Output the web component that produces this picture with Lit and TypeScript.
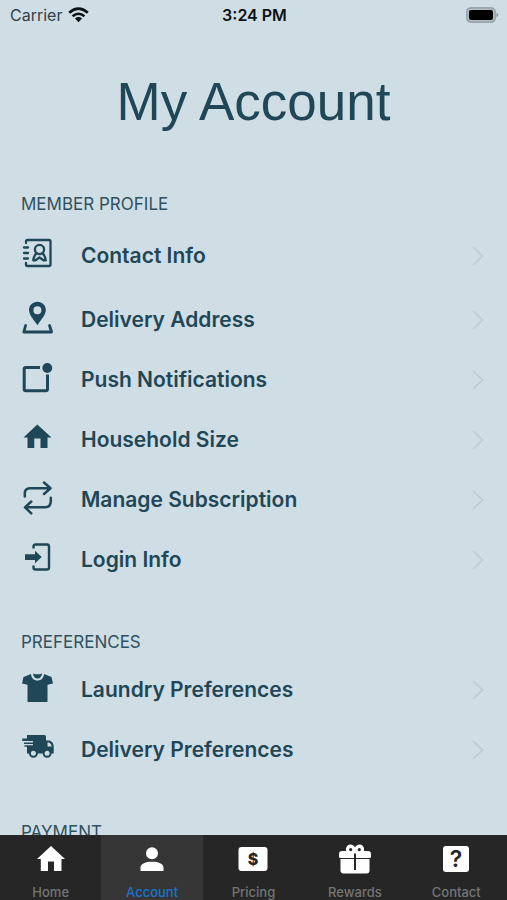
import { LitElement, html, svg, css, type SVGTemplateResult } from "lit";
import { customElement, property } from "lit/decorators.js";
import { classMap } from "lit/directives/class-map.js";

const icons: Record<string, SVGTemplateResult> = {
  contact: svg`
    <g fill="none" stroke="currentColor" stroke-width="2.300" stroke-linecap="round" stroke-linejoin="round">
      <path d="M5 6V4.500Q5 3 6.500 3H28Q29.500 3 29.500 4.500V27.500Q29.500 29 28 29H6.500Q5 29 5 27.500V26"/>
      <path d="M3 10.500H7M3 16H7M3 21.500H7"/>
      <circle cx="18.500" cy="12.500" r="4.600"/>
      <path d="M15.500 16.200C14 18 12.500 19.500 12.200 23.300H14.500L18.500 20.500L22.500 23.300H24.800C24.500 19.500 23 18 21.500 16.200"/>
    </g>`,
  pin: svg`
    <path fill="currentColor" fill-rule="evenodd" d="M16.400 .7C11.600 .7 8 4.300 8 9C8 14 12.500 18 16.400 24.300C20.300 18 24.800 14 24.800 9C24.800 4.300 21.200 .7 16.400 .7ZM16.400 5.200A4 4 0 1 1 16.400 13.200A4 4 0 0 1 16.400 5.200Z"/>
    <path fill="none" stroke="currentColor" stroke-width="2.800" stroke-linecap="round" stroke-linejoin="round" d="M4.600 24.500L2.800 31H30.600L28.500 24.500"/>`,
  push: svg`
    <path fill="none" stroke="currentColor" stroke-width="3" d="M19 6.500H5Q3.200 6.500 3.200 8.300V28Q3.200 29.800 5 29.800H24.700Q26.500 29.800 26.500 28V13.500"/>
    <circle cx="26.300" cy="7" r="4.900" fill="currentColor"/>`,
  house: svg`
    <path fill="currentColor" d="M16.300 3.500L30.500 16.500H26.500V27H19.500V17.500H13.300V27H6.500V16.500H2.500Z"/>`,
  repeat: svg`
    <path fill="none" stroke="currentColor" stroke-width="2.500" stroke-linecap="round" stroke-linejoin="round" d="M3.800 15.500V12.500Q3.800 7.200 9 7.200H29M23 1.500L29.500 7.200L23 13M29.800 16.800V20Q29.800 26.300 24 26.300H4.500M10.300 20.500L4 26.300L10.300 32.300"/>`,
  login: svg`
    <path fill="none" stroke="currentColor" stroke-width="2.400" d="M12.500 7.500V5.500Q12.500 3.500 14.500 3.500H26Q28 3.500 28 5.500V26.500Q28 28.500 26 28.500H14.500Q12.500 28.500 12.500 26.500V24.500"/>
    <path fill="currentColor" d="M4 13.300H14V9.700L20.700 16L14 22.300V19H4Z"/>`,
  shirt: svg`
    <path fill="currentColor" d="M10 3L2.500 6L1 12.500L6.500 13.800V31H26.500V13.800L32 12.500L30.500 6L23 3C22.500 7.500 20 9.500 16.500 9.500S10.500 7.500 10 3Z"/>
    <path fill="currentColor" d="M12 2.500Q16.500 4.200 21 2.500C20.500 6 19 7.600 16.500 7.600S12.500 6 12 2.500Z"/>`,
  truck: svg`
    <path fill="currentColor" fill-rule="evenodd" d="M6 4H23.500Q25 4 25 5.500V9.500H28.500Q32.700 11 32.700 15.500V22.500H6V15.800H3.500V14.300H12V13H3V11.500H12V10H1.200V7.500H6ZM26.500 11.500V15.500H30.700Q30.500 12.500 28 11.500Z"/>
    <g class="wheel">
      <circle cx="12.400" cy="22.300" r="3.500"/>
      <circle cx="26.100" cy="22.300" r="3.500"/>
    </g>`,
  home: svg`
    <path fill="currentColor" d="M16 3L30 16H26.500V28H19V18.500H13V28H5.800V16H2Z"/>`,
  person: svg`
    <circle cx="16" cy="10.300" r="6" fill="currentColor"/>
    <path fill="currentColor" d="M4.500 28V24.500C4.500 20.500 10 18.700 16 18.700S27.500 20.500 27.500 24.500V28Z"/>`,
  price: svg`
    <rect x="1.500" y="4" width="29" height="24" rx="3" fill="currentColor"/>
    <text class="mark heavy" x="16" y="21.500" font-size="16">$</text>`,
  gift: svg`
    <path fill="currentColor" fill-rule="evenodd" d="M3 8H7.200A4.700 4.700 0 0 1 16 4.500A4.700 4.700 0 0 1 24.800 8H29Q32 8 32 11V13.500Q32 15 30.500 15H1.500Q0 15 0 13.500V11Q0 8 3 8ZM11.700 5A1.600 1.600 0 1 0 11.700 8.200A1.600 1.600 0 0 0 11.700 5ZM20.300 5A1.600 1.600 0 1 0 20.300 8.200A1.600 1.600 0 0 0 20.300 5Z"/>
    <path fill="currentColor" d="M1.500 16H30.500V27.500Q30.500 30.500 27.500 30.500H4.500Q1.500 30.500 1.500 27.500Z"/>
    <path class="ribbon" d="M16 10.500V27"/>`,
  help: svg`
    <rect x="3" y="3" width="26" height="26" rx="3" fill="currentColor"/>
    <text class="mark" x="16" y="24" font-size="23">?</text>`,
};

@customElement("app-icon")
class AppIcon extends LitElement {
  @property() name = "";

  static styles = css`
    :host {
      display: block;
      flex: none;
      width: 32px;
      height: 32px;
    }
    .icon {
      display: block;
      width: 100%;
      height: 100%;
      overflow: visible;
    }
    .mark {
      fill: #262626;
      font-family: Inter, sans-serif;
      font-weight: 600;
      text-anchor: middle;
    }
    .mark.heavy {
      font-weight: 800;
    }
    .ribbon {
      stroke: #262626;
      stroke-width: 2;
    }
    .wheel {
      fill: #cfdde4;
      stroke: currentColor;
      stroke-width: 2;
    }
  `;

  render() {
    return html`<svg class="icon" viewBox="0 0 32 32" aria-hidden="true">${icons[this.name]}</svg>`;
  }
}

interface Item {
  icon: string;
  label: string;
}

interface Section {
  title: string;
  items: Item[];
}

const sections: Section[] = [
  {
    title: "MEMBER PROFILE",
    items: [
      { icon: "contact", label: "Contact Info" },
      { icon: "pin", label: "Delivery Address" },
      { icon: "push", label: "Push Notifications" },
      { icon: "house", label: "Household Size" },
      { icon: "repeat", label: "Manage Subscription" },
      { icon: "login", label: "Login Info" },
    ],
  },
  {
    title: "PREFERENCES",
    items: [
      { icon: "shirt", label: "Laundry Preferences" },
      { icon: "truck", label: "Delivery Preferences" },
    ],
  },
  { title: "PAYMENT", items: [] },
];

const tabs: Item[] = [
  { icon: "home", label: "Home" },
  { icon: "person", label: "Account" },
  { icon: "price", label: "Pricing" },
  { icon: "gift", label: "Rewards" },
  { icon: "help", label: "Contact" },
];

@customElement("app-root")
class AppRoot extends LitElement {
  static styles = css`
    :host {
      display: flex;
      flex-direction: column;
      height: 100vh;
      background: #cfdde4;
      color: #1f4757;
      font-family: Inter, sans-serif;
    }
    .status {
      flex: none;
      display: grid;
      grid-template-columns: 1fr auto 1fr;
      align-items: center;
      height: 30px;
      padding: 0 8px 0 10px;
      color: #0c1114;
      font-size: 16px;
      line-height: 20px;
    }
    .carrier {
      display: flex;
      align-items: center;
      gap: 6px;
      color: #33424a;
    }
    .wifi {
      width: 21px;
      height: 16px;
      color: #0c1114;
    }
    .time {
      font-weight: 600;
    }
    .battery {
      justify-self: end;
      width: 33px;
      height: 16px;
    }
    .content {
      flex: 1;
      min-height: 0;
      overflow: hidden;
    }
    .title {
      margin: 40px 0 18px;
      font-family: "Liberation Sans", Arial, sans-serif;
      font-size: 53px;
      line-height: 64px;
      font-weight: 400;
      text-align: center;
    }
    .section {
      padding-top: 40px;
    }
    .heading {
      margin: 0;
      padding: 0 21px 6px;
      font-size: 17px;
      line-height: 24px;
      font-weight: 400;
      color: #2f5261;
    }
    .list {
      margin: 0;
      padding: 0;
      list-style: none;
    }
    .row {
      display: flex;
      align-items: center;
      height: 60px;
      padding: 0 22px 0 21px;
      color: inherit;
      text-decoration: none;
    }
    .row.tall {
      height: 68px;
    }
    .row-icon {
      margin-right: 28px;
      padding-bottom: 6px;
    }
    .label {
      flex: 1;
      font-size: 21px;
      line-height: 28px;
      font-weight: 600;
    }
    .chevron {
      width: 14px;
      height: 22px;
      color: #bdcad1;
    }
    .tabs {
      flex: none;
      display: grid;
      grid-template-columns: repeat(5, 1fr);
      background: #262626;
    }
    .tab {
      display: flex;
      flex-direction: column;
      align-items: center;
      gap: 9px;
      padding-top: 8px;
      color: #fff;
      text-decoration: none;
    }
    .tab.active {
      background: #363636;
    }
    .tab-label {
      font-size: 13px;
      line-height: 16px;
      font-weight: 500;
      color: #757575;
    }
    .active .tab-label {
      color: #1a73cf;
    }
  `;

  private renderRow(item: Item, tall: boolean) {
    return html`
      <li>
        <a class=${classMap({ row: true, tall })} href="#">
          <app-icon class="row-icon" name=${item.icon}></app-icon>
          <span class="label">${item.label}</span>
          <svg class="chevron" viewBox="0 0 14 22" aria-hidden="true">
            <path d="M2 2L11.500 11L2 20" fill="none" stroke="currentColor" stroke-width="1.500"/>
          </svg>
        </a>
      </li>
    `;
  }

  render() {
    return html`
      <header class="status">
        <span class="carrier">
          Carrier
          <svg class="wifi" viewBox="0 0 21 16" aria-hidden="true">
            <g fill="none" stroke="currentColor" stroke-width="2.600">
              <path d="M1.200 5.800Q10.500 -2.400 19.800 5.800"/>
              <path d="M4.600 9.300Q10.500 4.200 16.400 9.300"/>
            </g>
            <path fill="currentColor" d="M7 11.500Q10.500 8.700 14 11.500L10.500 15.200Z"/>
          </svg>
        </span>
        <span class="time">3:24 PM</span>
        <svg class="battery" viewBox="0 0 33 16" aria-hidden="true">
          <rect x=".8" y=".8" width="28.400" height="14.400" rx="4" fill="#b3bfc4" stroke="#8d989d" stroke-width="1.200"/>
          <rect x="3" y="3" width="24" height="10" rx="2" fill="#000"/>
          <path d="M30.500 5.800Q32.300 6.500 32.300 8T30.500 10.200Z" fill="#8d989d"/>
        </svg>
      </header>
      <main class="content">
        <h1 class="title">My Account</h1>
        ${sections.map(
          (section, s) => html`
            <section class="section">
              <h2 class="heading">${section.title}</h2>
              <ul class="list">
                ${section.items.map((item, i) => this.renderRow(item, s === 0 && i === 0))}
              </ul>
            </section>
          `,
        )}
      </main>
      <nav class="tabs">
        ${tabs.map(
          (tab) => html`
            <a class=${classMap({ tab: true, active: tab.label === "Account" })} href="#">
              <app-icon name=${tab.icon}></app-icon>
              <span class="tab-label">${tab.label}</span>
            </a>
          `,
        )}
      </nav>
    `;
  }
}
